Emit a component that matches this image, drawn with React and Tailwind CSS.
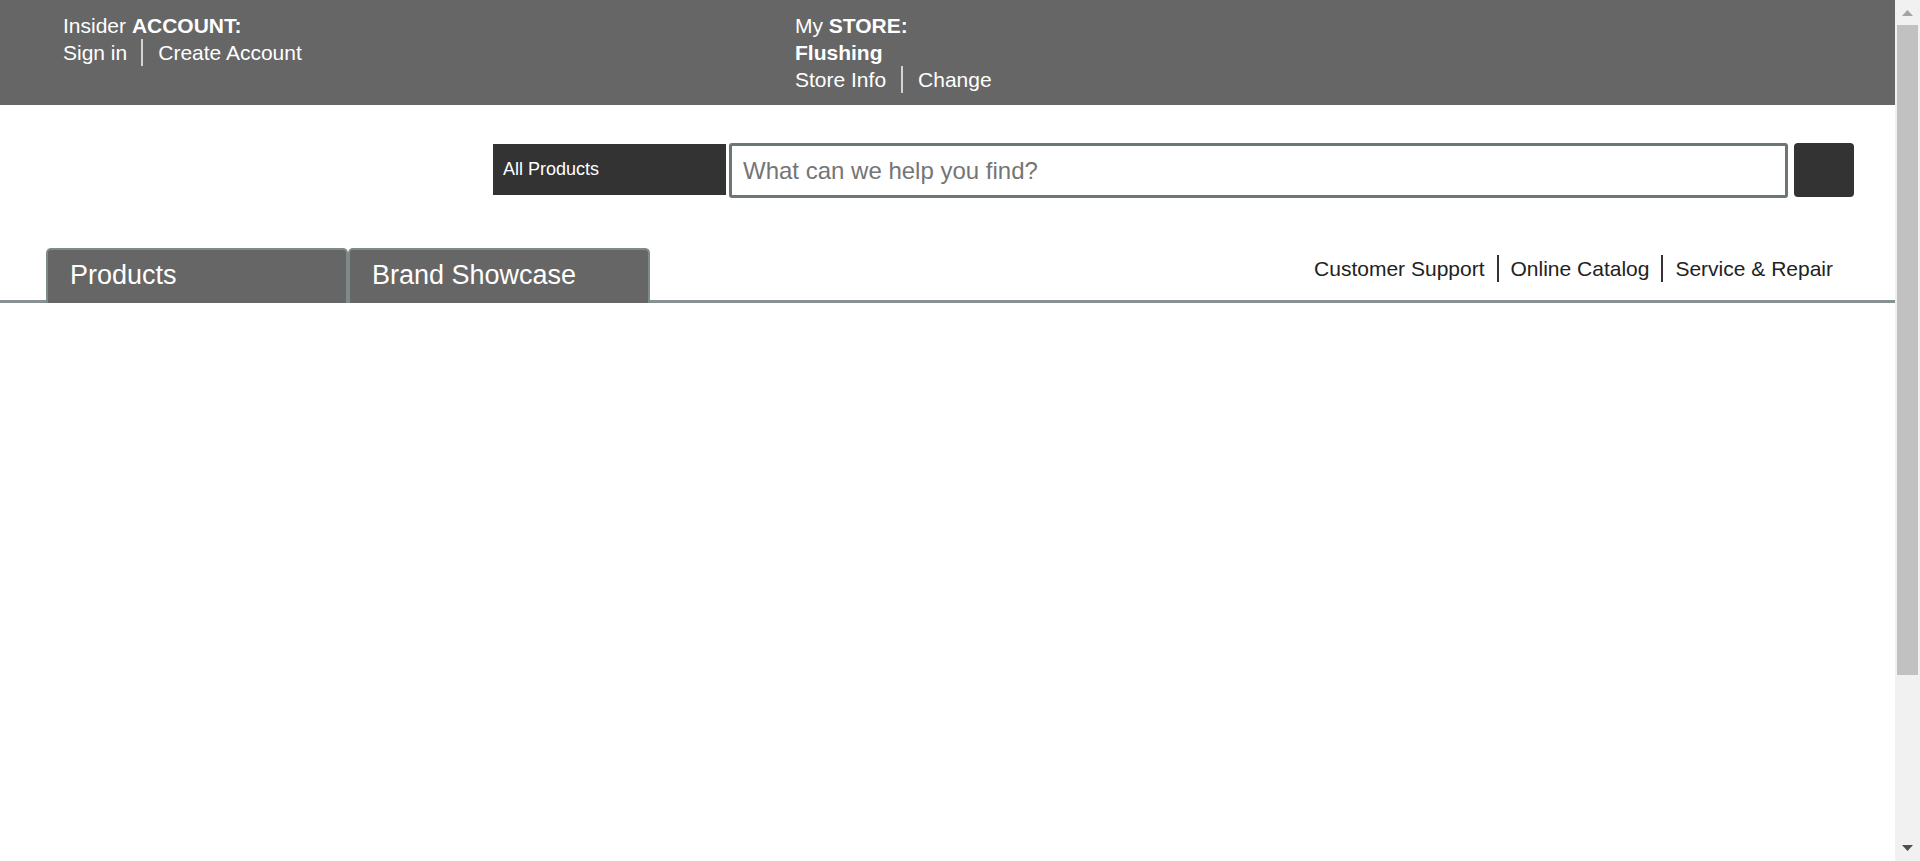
import React from "react";

function Scrollbar() {
  return (
    <div className="w-[25px] h-[861px] shrink-0 bg-[#f1f1f1] flex flex-col">
      <div className="h-[25px] flex items-start justify-center pt-[10px]">
        <svg width="11" height="6" viewBox="0 0 11 6">
          <polygon points="0,6 11,6 5.5,0" fill="#a3a3a3" />
        </svg>
      </div>
      <div className="mx-[2px] h-[650px] bg-[#c1c1c1]" />
      <div className="flex-1" />
      <div className="h-[25px] flex items-start justify-center pt-[9px]">
        <svg width="11" height="6" viewBox="0 0 11 6">
          <polygon points="0,0 11,0 5.5,6" fill="#505050" />
        </svg>
      </div>
    </div>
  );
}

export default function App() {
  return (
    <div className="h-[861px] flex bg-white font-['Liberation_Sans',Arial,sans-serif] overflow-hidden">
      <div className="flex-1 min-w-0 h-[861px] overflow-hidden">
        {/* Top header */}
        <header className="bg-[#666666] h-[105px] pt-[12px] pl-[63px] flex text-white text-[21px] leading-[27px]">
          <div className="w-[732px]">
            <div>
              Insider <span className="font-bold">ACCOUNT:</span>
            </div>
            <div className="flex">
              <a className="pr-[14px] cursor-pointer">Sign in</a>
              <a className="pl-[15px] border-l-2 border-[#d4d4d4] cursor-pointer">Create Account</a>
            </div>
          </div>
          <div>
            <div>
              My <span className="font-bold">STORE:</span>
            </div>
            <div className="font-bold">Flushing</div>
            <div className="flex">
              <a className="pr-[15px] cursor-pointer">Store Info</a>
              <a className="pl-[15px] border-l-2 border-[#d4d4d4] cursor-pointer">Change</a>
            </div>
          </div>
        </header>

        {/* Search row */}
        <div className="mt-[38px] flex justify-end items-start pr-[41px]">
          <div className="mt-[1px] w-[233px] h-[51px] bg-[#333333] text-white text-[18px] pl-[10px] flex items-center">
            All Products
          </div>
          <input
            type="text"
            placeholder="What can we help you find?"
            className="ml-[3px] w-[1059px] h-[55px] border-[3px] border-solid border-[#6c7676] rounded-[3px] pl-[11px] text-[24px] text-[#333] placeholder:text-[#757575] outline-none bg-white"
          />
          <button className="ml-[6px] w-[60px] h-[54px] bg-[#333333] rounded-[4px]" aria-label="Search"></button>
        </div>

        {/* Tabs row */}
        <nav className="mt-[50px] flex items-end justify-between border-b-[3px] border-[#879191] pl-[46px]">
          <div className="flex">
            <div className="-mb-[3px] w-[302px] h-[55px] border-2 border-b-0 border-[#7f8a8a] rounded-t-[5px] bg-[#666666] text-white text-[27px] leading-[31px] pt-[10px] pl-[22px]">
              Products
            </div>
            <div className="-mb-[3px] w-[302px] h-[55px] border-2 border-b-0 border-[#7f8a8a] rounded-t-[5px] bg-[#666666] text-white text-[27px] leading-[31px] pt-[10px] pl-[22px]">
              Brand Showcase
            </div>
          </div>
          <div className="self-start mt-[7px] flex text-[21px] leading-[27px] text-[#222222] pr-[62px]">
            <a className="pr-[12px] cursor-pointer">Customer Support</a>
            <a className="px-[12px] border-l-2 border-[#333333] cursor-pointer">Online Catalog</a>
            <a className="pl-[12px] border-l-2 border-[#333333] cursor-pointer">Service &amp; Repair</a>
          </div>
        </nav>
      </div>
      <Scrollbar />
    </div>
  );
}
